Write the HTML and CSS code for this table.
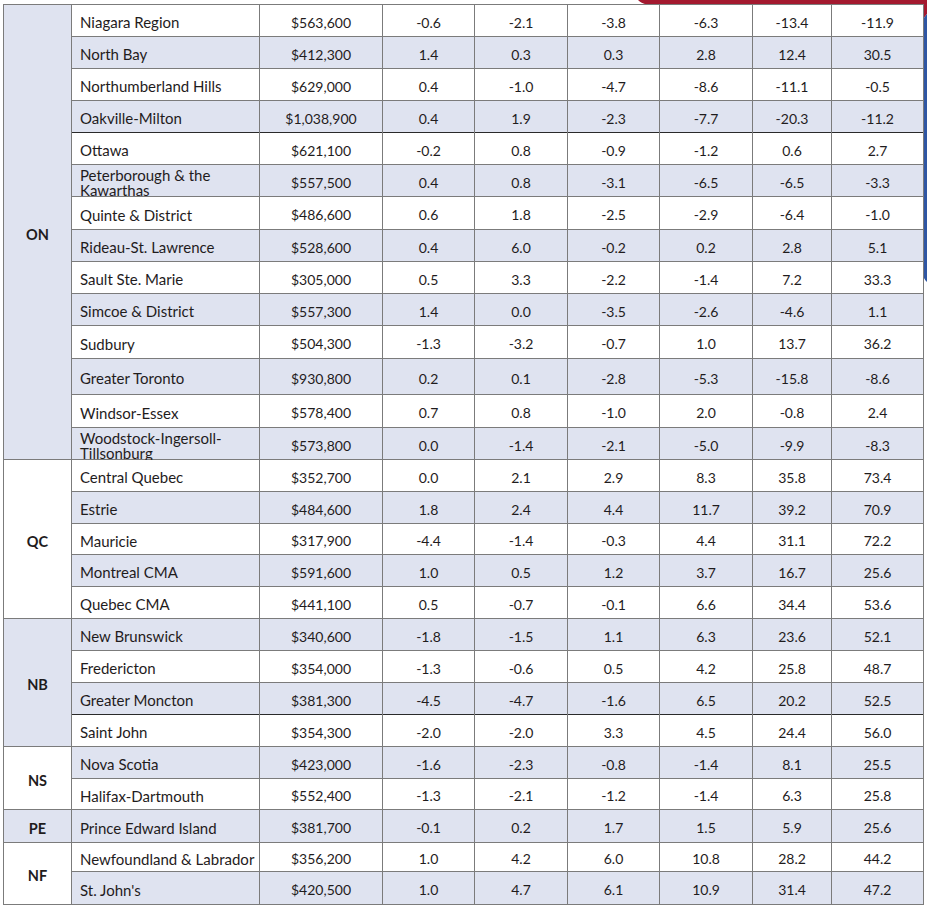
FILE: index.html
```html
<!DOCTYPE html>
<html lang="en">
<head>
<meta charset="utf-8">
<title>MLS Home Price Index by market</title>
<link rel="stylesheet" href="styles.css">
</head>
<body>
<div class="page">
  <svg class="deco" width="289" height="290" viewBox="0 0 289 290" aria-hidden="true">
    <path class="red" d="M0,0 H289 V14 L285,19 V6 H22 C12,6 4,4 0,0 Z"/>
    <path class="blue" d="M289,14 V282 C287,280 285,278 285,272 V19 Z"/>
  </svg>
  <div class="tbl">
    <div class="c prov alt span14">ON</div>
    <div class="row"><div class="c name">Niagara Region</div><div class="c">$563,600</div><div class="c">-0.6</div><div class="c">-2.1</div><div class="c">-3.8</div><div class="c">-6.3</div><div class="c">-13.4</div><div class="c">-11.9</div></div>
    <div class="row alt"><div class="c name">North Bay</div><div class="c">$412,300</div><div class="c">1.4</div><div class="c">0.3</div><div class="c">0.3</div><div class="c">2.8</div><div class="c">12.4</div><div class="c">30.5</div></div>
    <div class="row"><div class="c name">Northumberland Hills</div><div class="c">$629,000</div><div class="c">0.4</div><div class="c">-1.0</div><div class="c">-4.7</div><div class="c">-8.6</div><div class="c">-11.1</div><div class="c">-0.5</div></div>
    <div class="row alt"><div class="c name">Oakville-Milton</div><div class="c">$1,038,900</div><div class="c">0.4</div><div class="c">1.9</div><div class="c">-2.3</div><div class="c">-7.7</div><div class="c">-20.3</div><div class="c">-11.2</div></div>
    <div class="row dark"><div class="c name">Ottawa</div><div class="c">$621,100</div><div class="c">-0.2</div><div class="c">0.8</div><div class="c">-0.9</div><div class="c">-1.2</div><div class="c">0.6</div><div class="c">2.7</div></div>
    <div class="row alt"><div class="c name two">Peterborough &amp; the Kawarthas</div><div class="c">$557,500</div><div class="c">0.4</div><div class="c">0.8</div><div class="c">-3.1</div><div class="c">-6.5</div><div class="c">-6.5</div><div class="c">-3.3</div></div>
    <div class="row"><div class="c name">Quinte &amp; District</div><div class="c">$486,600</div><div class="c">0.6</div><div class="c">1.8</div><div class="c">-2.5</div><div class="c">-2.9</div><div class="c">-6.4</div><div class="c">-1.0</div></div>
    <div class="row alt"><div class="c name">Rideau-St. Lawrence</div><div class="c">$528,600</div><div class="c">0.4</div><div class="c">6.0</div><div class="c">-0.2</div><div class="c">0.2</div><div class="c">2.8</div><div class="c">5.1</div></div>
    <div class="row"><div class="c name">Sault Ste. Marie</div><div class="c">$305,000</div><div class="c">0.5</div><div class="c">3.3</div><div class="c">-2.2</div><div class="c">-1.4</div><div class="c">7.2</div><div class="c">33.3</div></div>
    <div class="row alt"><div class="c name">Simcoe &amp; District</div><div class="c">$557,300</div><div class="c">1.4</div><div class="c">0.0</div><div class="c">-3.5</div><div class="c">-2.6</div><div class="c">-4.6</div><div class="c">1.1</div></div>
    <div class="row"><div class="c name">Sudbury</div><div class="c">$504,300</div><div class="c">-1.3</div><div class="c">-3.2</div><div class="c">-0.7</div><div class="c">1.0</div><div class="c">13.7</div><div class="c">36.2</div></div>
    <div class="row alt"><div class="c name">Greater Toronto</div><div class="c">$930,800</div><div class="c">0.2</div><div class="c">0.1</div><div class="c">-2.8</div><div class="c">-5.3</div><div class="c">-15.8</div><div class="c">-8.6</div></div>
    <div class="row"><div class="c name">Windsor-Essex</div><div class="c">$578,400</div><div class="c">0.7</div><div class="c">0.8</div><div class="c">-1.0</div><div class="c">2.0</div><div class="c">-0.8</div><div class="c">2.4</div></div>
    <div class="row alt"><div class="c name two">Woodstock-Ingersoll-Tillsonburg</div><div class="c">$573,800</div><div class="c">0.0</div><div class="c">-1.4</div><div class="c">-2.1</div><div class="c">-5.0</div><div class="c">-9.9</div><div class="c">-8.3</div></div>

    <div class="c prov span5">QC</div>
    <div class="row"><div class="c name">Central Quebec</div><div class="c">$352,700</div><div class="c">0.0</div><div class="c">2.1</div><div class="c">2.9</div><div class="c">8.3</div><div class="c">35.8</div><div class="c">73.4</div></div>
    <div class="row alt"><div class="c name">Estrie</div><div class="c">$484,600</div><div class="c">1.8</div><div class="c">2.4</div><div class="c">4.4</div><div class="c">11.7</div><div class="c">39.2</div><div class="c">70.9</div></div>
    <div class="row"><div class="c name">Mauricie</div><div class="c">$317,900</div><div class="c">-4.4</div><div class="c">-1.4</div><div class="c">-0.3</div><div class="c">4.4</div><div class="c">31.1</div><div class="c">72.2</div></div>
    <div class="row alt"><div class="c name">Montreal CMA</div><div class="c">$591,600</div><div class="c">1.0</div><div class="c">0.5</div><div class="c">1.2</div><div class="c">3.7</div><div class="c">16.7</div><div class="c">25.6</div></div>
    <div class="row"><div class="c name">Quebec CMA</div><div class="c">$441,100</div><div class="c">0.5</div><div class="c">-0.7</div><div class="c">-0.1</div><div class="c">6.6</div><div class="c">34.4</div><div class="c">53.6</div></div>

    <div class="c prov alt span4">NB</div>
    <div class="row alt"><div class="c name">New Brunswick</div><div class="c">$340,600</div><div class="c">-1.8</div><div class="c">-1.5</div><div class="c">1.1</div><div class="c">6.3</div><div class="c">23.6</div><div class="c">52.1</div></div>
    <div class="row"><div class="c name">Fredericton</div><div class="c">$354,000</div><div class="c">-1.3</div><div class="c">-0.6</div><div class="c">0.5</div><div class="c">4.2</div><div class="c">25.8</div><div class="c">48.7</div></div>
    <div class="row alt"><div class="c name">Greater Moncton</div><div class="c">$381,300</div><div class="c">-4.5</div><div class="c">-4.7</div><div class="c">-1.6</div><div class="c">6.5</div><div class="c">20.2</div><div class="c">52.5</div></div>
    <div class="row dark"><div class="c name">Saint John</div><div class="c">$354,300</div><div class="c">-2.0</div><div class="c">-2.0</div><div class="c">3.3</div><div class="c">4.5</div><div class="c">24.4</div><div class="c">56.0</div></div>

    <div class="c prov span2">NS</div>
    <div class="row alt"><div class="c name">Nova Scotia</div><div class="c">$423,000</div><div class="c">-1.6</div><div class="c">-2.3</div><div class="c">-0.8</div><div class="c">-1.4</div><div class="c">8.1</div><div class="c">25.5</div></div>
    <div class="row"><div class="c name">Halifax-Dartmouth</div><div class="c">$552,400</div><div class="c">-1.3</div><div class="c">-2.1</div><div class="c">-1.2</div><div class="c">-1.4</div><div class="c">6.3</div><div class="c">25.8</div></div>

    <div class="c prov alt span1">PE</div>
    <div class="row alt"><div class="c name">Prince Edward Island</div><div class="c">$381,700</div><div class="c">-0.1</div><div class="c">0.2</div><div class="c">1.7</div><div class="c">1.5</div><div class="c">5.9</div><div class="c">25.6</div></div>

    <div class="c prov span2">NF</div>
    <div class="row"><div class="c name">Newfoundland &amp; Labrador</div><div class="c">$356,200</div><div class="c">1.0</div><div class="c">4.2</div><div class="c">6.0</div><div class="c">10.8</div><div class="c">28.2</div><div class="c">44.2</div></div>
    <div class="row alt"><div class="c name">St. John's</div><div class="c">$420,500</div><div class="c">1.0</div><div class="c">4.7</div><div class="c">6.1</div><div class="c">10.9</div><div class="c">31.4</div><div class="c">47.2</div></div>
  </div>
</div>
</body>
</html>
```

FILE: styles.css
```css
html {
  background: #ffffff;
}

body {
  margin: 0;
  font-family: Lato, "Liberation Sans", sans-serif;
  color: #1f1c1d;
}

.page {
  position: relative;
  padding: 4px 0 0 3px;
}

.deco {
  position: absolute;
  top: 0;
  left: 638px;
  z-index: -1;
}

.deco .red { fill: #a3192f; }
.deco .blue { fill: #2f56a3; }

.tbl {
  display: grid;
  width: max-content;
  grid-template-columns: 67px 187px 122px 91px 92px 91px 92px 78px 91px;
  grid-template-rows:
    31px 31px 31px 31px 31px 31px 32px 31px 31px 31px 32px 35px 32px 31px
    31px 31px 30px 31px 31px
    31px 31px 31px 31px
    31px 30px
    32px
    28px 32px;
  gap: 1px;
  padding: 1px;
  background: #7b7b7b;
}

.row {
  display: contents;
}

.c {
  box-sizing: border-box;
  display: flex;
  align-items: center;
  justify-content: center;
  padding-top: 3px;
  background: #ffffff;
  font-size: 14px;
  white-space: nowrap;
  overflow: visible;
}

.row.alt > .c,
.prov.alt {
  background: #dfe3f0;
}

.row.dark > .c {
  box-shadow: 0 -1px 0 #2a2a2a;
}

.c.name {
  justify-content: flex-start;
  padding-left: 8px;
  font-size: 15px;
}

.c.two {
  align-items: flex-start;
  white-space: normal;
  line-height: 15px;
  padding-top: 3px;
  padding-right: 6px;
}

.prov {
  grid-column: 1;
  font-weight: 700;
  font-size: 14.5px;
  padding-top: 4px;
}

.span14 { grid-row: span 14; }
.span5 { grid-row: span 5; }
.span4 { grid-row: span 4; }
.span2 { grid-row: span 2; }
.span1 { grid-row: span 1; }
```
